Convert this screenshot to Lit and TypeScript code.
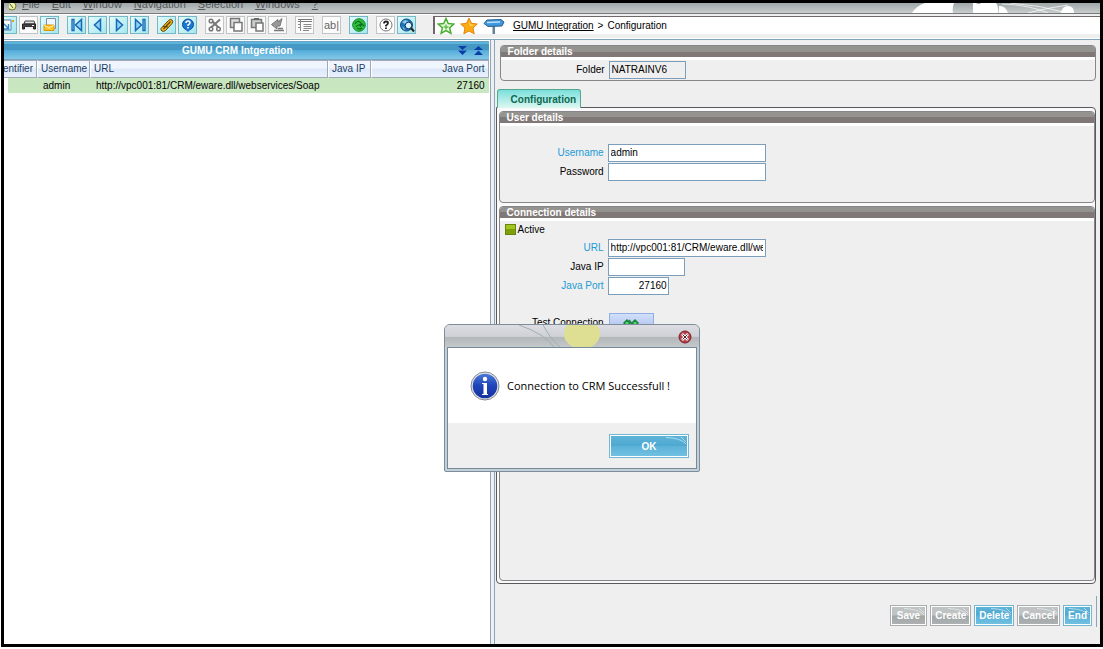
import { LitElement, html, css, svg } from "lit";
import { customElement, property } from "lit/decorators.js";

const stroke = "#1769b5";

const ICONS: Record<string, unknown> = {
  doc: svg`<path d="M-4 3h15v10h-15z" fill="#fff" stroke="#5a7fa6"/><path d="M3 6l5 5M8.500 7v5H4" stroke="#2b86d1" stroke-width="1.500" fill="none"/><rect x="12" y="3" width="2" height="2" fill="#e2a21c"/>`,
  print: svg`<path d="M4 4h9l1 3H3z" fill="#ddd" stroke="#444"/><path d="M1.500 7h13v5h-2v-2h-9v2h-2z" fill="#444" stroke="#222"/><path d="M4 10h8v2H4z" fill="#eee"/><rect x="11" y="8" width="2" height="1" fill="#fff"/>`,
  open: svg`<path d="M4.500 1.500h9v10h-9z" fill="#eef6fc" stroke="#7a8fa5"/><path d="M2 8h10v5.500H2z" fill="#fbc42b" stroke="#d9960c"/><path d="M2 8l5 3 5-3" stroke="#fff2b0"/>`,
  first: svg`<path d="M3 2.500h2v11H3z" fill="#8fd3f7" stroke=${stroke} stroke-width="1.300"/><path d="M12.500 2.500v11L6.500 8z" fill="#8fd3f7" stroke=${stroke} stroke-width="1.500"/>`,
  prev: svg`<path d="M10.500 2.500v11L4.500 8z" fill="#8fd3f7" stroke=${stroke} stroke-width="1.500"/>`,
  next: svg`<path d="M5.500 2.500v11L11.500 8z" fill="#8fd3f7" stroke=${stroke} stroke-width="1.500"/>`,
  last: svg`<path d="M11 2.500h2v11h-2z" fill="#8fd3f7" stroke=${stroke} stroke-width="1.300"/><path d="M3.500 2.500v11L9.500 8z" fill="#8fd3f7" stroke=${stroke} stroke-width="1.500"/>`,
  clip: svg`<path d="M2 11.500l7.500-8q2-2 3.500-.5t0 3.500l-6.500 7q-2 1.500-3.500.5t-1-2.500z" fill="#f3b51c" stroke="#5b4208"/><path d="M4.500 12l7-7.500M4 9.500l5 .5" stroke="#5b4208" stroke-width="1.200"/>`,
  help: svg`<circle cx="8" cy="7.500" r="5.500" fill="#1c77cf" stroke="#0d4c96"/><path d="M5 12l3 3 3-3z" fill="#1c77cf"/><path d="M6 6q0-2 2-2t2 1.700Q10 7 8 8v1M8 10v1.500" stroke="#fff" stroke-width="1.500" fill="none"/>`,
  cut: svg`<path d="M4 3l8 8M13 2.500l-9 8" stroke="#777" stroke-width="2"/><circle cx="4" cy="4" r="1.800" fill="#fff" stroke="#777" stroke-width="1.500"/><circle cx="4" cy="12" r="1.800" fill="#fff" stroke="#777" stroke-width="1.500"/><circle cx="11.500" cy="12" r="1.800" fill="#fff" stroke="#777" stroke-width="1.500"/>`,
  copy: svg`<path d="M2.500 1.500h9v9h-9z" fill="#ddd" stroke="#777" stroke-width="1.500"/><path d="M6 5.500h8v8.500H6z" fill="#fff" stroke="#777" stroke-width="1.500"/>`,
  paste: svg`<path d="M2.500 2.500h10v8h-10z" fill="#ccc" stroke="#777" stroke-width="1.500"/><path d="M5 2h5" stroke="#666" stroke-width="2"/><path d="M7 6h7v8H7z" fill="#fff" stroke="#777" stroke-width="1.500"/>`,
  undo: svg`<path d="M12 1.500L8 5V2.500L1.500 7.500 7 12V9h3z" fill="#999" stroke="#777"/><path d="M4 13.500h10M8 11.500h5" stroke="#777" stroke-width="1.500"/>`,
  list: svg`<path d="M1 2.500h14M1 4.500h14" stroke="#777"/><path d="M3.500 3v11M6.500 7.500h8M6.500 9.500h8M6.500 11.500h8M6 13.500h6" stroke="#888"/><path d="M1 7.500h3M1 10.500h3" stroke="#888"/>`,
  globe: svg`<circle cx="8" cy="8" r="6.300" fill="#2fbf3e" stroke="#0f8424"/><path d="M4 7q2-4 5-2t-1 3q-3 1-3 2M9 10l2-3 2 2M6 11q3 2 5 0" stroke="#0a6f1a" fill="none" stroke-width="1.300"/>`,
  about: svg`<circle cx="8" cy="8" r="6" fill="#fff" stroke="#777"/><path d="M6 6.500q0-2 2-2t2 1.500-2 2.500v1M8 10.500V12" stroke="#222" stroke-width="1.800" fill="none"/>`,
  search: svg`<circle cx="7.500" cy="8" r="6" fill="#1d74bb" stroke="#134d83"/><path d="M3 5q3-3 6-1L6 7zM3 9l3 3-1 1z" fill="#8fd0ee"/><circle cx="9.500" cy="8.500" r="3.300" fill="#d9f2fb" stroke="#15395c"/><path d="M12 11l3 3.500" stroke="#222" stroke-width="2"/>`,
  abc: svg`<text x="0" y="12" font-size="11" fill="#666" font-family="Liberation Sans, sans-serif">ab|</text>`,
};

/** Square tool button; the tone decides between the cyan, plain and greyed look. */
@customElement("tool-button")
class ToolButton extends LitElement {
  @property() icon = "";
  @property() label = "";
  @property() tone = "on";
  static styles = css`
    :host { display: block; flex: none; }
    button {
      display: grid; place-items: center; width: 19px; height: 18px; padding: 0;
      border: 1px solid #8fb8bd; background: #fbfbfb; overflow: hidden;
    }
    .on { background: linear-gradient(135deg, #e4fafb, #a5e7f0); border-color: #74b9c3; }
    .off { border-color: #c3c6c7; }
    svg { display: block; width: 16px; height: 16px; }
  `;
  render() {
    return html`<button class=${this.tone} aria-label=${this.label}>
      <svg viewBox="0 0 16 16" fill="none">${ICONS[this.icon]}</svg>
    </button>`;
  }
}

/** Framed group with a two-tone grey caption bar. */
@customElement("group-box")
class GroupBox extends LitElement {
  @property() caption = "";
  static styles = css`
    :host { display: block; border: 1px solid #86868a; border-radius: 4px; overflow: hidden; background: #efefef; }
    h2 {
      margin: 0; padding-left: 7px; height: 14px; box-sizing: border-box; border-bottom: 3px solid #fff;
      font: bold 10px/12px "Liberation Sans", Arial, sans-serif; color: #fff;
      background: linear-gradient(#95938f 0 50%, #7f7876 50%);
    }
  `;
  render() {
    return html`<h2>${this.caption}</h2><slot></slot>`;
  }
}

@customElement("app-root")
class AppRoot extends LitElement {
  static styles = css`
    :host {
      display: block; height: 100vh; box-sizing: border-box; padding: 0 0 2px 1px;
      background: #fff; color: #000; font: 10px/14px "Liberation Sans", Arial, sans-serif;
    }
    * { box-sizing: border-box; }
    .frame { position: relative; display: flex; flex-direction: column; height: 100%; border: 3px solid #000; background: #efefef; overflow: hidden; }

    .menubar {
      display: flex; align-items: flex-end; gap: 12px; height: 11px; flex: none; padding-left: 5px; overflow: hidden;
      border-bottom: 1px solid #77797a; background: linear-gradient(#9fa7a9, #c9cccc); color: #55595c; font-size: 11px;
    }
    .menubar a { color: inherit; text-decoration: none; padding-bottom: 2px; }
    .menubar u { text-underline-offset: 1px; }
    .app-icon { flex: none; width: 9px; height: 10px; margin-right: -8px; }
    .swirl { margin-left: auto; width: 190px; height: 10px; flex: none; }

    .toolbar { display: flex; height: 25px; flex: none; border-bottom: 1px solid #fff; }
    .tools { display: flex; gap: 2px; padding-top: 1px; width: 429px; flex: none; border-top: 1px solid #fff; overflow: hidden; }
    .tools .cut-off { margin-left: -6px; }
    .tools .wide { margin-left: 6px; }
    .address {
      flex: 1; display: flex; align-items: center; gap: 5px; margin: 2px 0 4px; padding-left: 2px;
      border-top: 1px solid #6f6866; border-left: 2px solid #6f6866; background: #fff;
    }
    .address svg { flex: none; width: 18px; height: 18px; }
    .address .sign { width: 22px; }
    .crumbs { padding-left: 3px; white-space: nowrap; }
    .crumbs a { color: #000; }
    .crumbs span { padding: 0 4px; }

    .main { flex: 1; display: flex; min-height: 0; border-top: 1px solid #7ea6bd; }
    .left { flex: 0 0 44.400%; display: flex; flex-direction: column; background: #fff; border-right: 1px solid #8ba5bb; padding: 1px 1px 0 0; }
    .title {
      display: flex; align-items: center; height: 18px; padding-right: 4px; border-top: 1px solid #6aa5c6; flex: none;
      background: linear-gradient(#5db3d9 0 10%, #4598c4 12% 48%, #55addb 50%, #83c9e6); color: #fff; font-weight: bold;
    }
    .title h1 { flex: 1; margin: 0; padding-left: 18px; text-align: center; font: inherit; }
    .title button { width: 12px; height: 14px; padding: 0; margin-left: 4px; border: 0; background: none; display: grid; place-items: center; }
    .title svg { display: block; width: 9px; height: 9px; }

    table { width: 100%; table-layout: fixed; border-collapse: separate; border-spacing: 0; border-top: 1px solid #79a3c3; white-space: nowrap; }
    th, td { padding: 0 3px; height: 15px; font-weight: normal; text-align: left; overflow: hidden; }
    th { height: 18px; color: #1b3d63; border: 1px solid #a0a9b4; border-left-color: #fff; background: linear-gradient(#eef5fd 0 45%, #dbe7f9 50%, #e9f1fd); }
    td { background: #c8e6c0; padding: 0 4px; }
    td:first-child { background: linear-gradient(90deg, #fff 4px, #c8e6c0 4px); }
    .c-id { width: 33px; } .c-user { width: 53px; } .c-url { width: 238px; } .c-ip { width: 43px; }
    th.first { padding-left: 0; border-left: 0; }
    .clip { display: flex; justify-content: flex-end; overflow: hidden; }
    th.num, td.num { text-align: right; }
    td.user { padding-left: 6px; }

    .right { flex: 1; min-width: 0; display: flex; flex-direction: column; margin-left: 3px; padding: 5px 4px 0 0; border-left: 1px solid #8ba5bb; }
    .folder { margin-left: 5px; height: 36px; flex: none; }
    .tabs { display: flex; height: 19px; margin: 8px 0 -1px 2px; flex: none; position: relative; }
    .tab {
      padding: 2px 4px 0 13px; border: 1px solid #55a88e; border-bottom: 0; border-radius: 3px 3px 0 0; color: #0c6a50;
      background: linear-gradient(#7adfdc, #dff7f2); font: bold 10px/14px "Liberation Sans", Arial, sans-serif;
    }
    .panel { flex: 1; display: flex; flex-direction: column; gap: 3px; margin-left: 1px; padding: 3px 0 2px 2px; border: 1px solid #5a5a5c; border-radius: 0 4px 4px 4px; background: #fafafa; min-height: 0; }
    .user-box { height: 92px; flex: none; }
    .conn-box { flex: 1; }

    .field { display: grid; grid-template-columns: 104px 1fr; column-gap: 4px; align-items: center; height: 19px; }
    .field label { text-align: right; white-space: nowrap; }
    .req { color: #219bd6; }
    .field input { width: 158px; height: 18px; padding: 0 2px; border: 1px solid #7b9ebd; border-radius: 0; background: #fff; font: inherit; color: #000; outline: 0; }
    .field .w-77 { width: 77px; }
    .field .w-61 { width: 61px; text-align: right; padding-right: 1px; }
    .folder .field input { background: #efefef; }
    .user-fields { padding-top: 17px; }
    .active { display: flex; align-items: center; gap: 2px; height: 17px; padding-left: 5px; }
    .active input { appearance: none; margin: 0; width: 11px; height: 11px; border: 1px solid #66850d; background: linear-gradient(#a6c420 0 45%, #7f9f08 50%); }
    .test { margin-top: 18px; }
    .test button { margin-left: 1px; width: 45px; height: 19px; padding: 0; border: 1px solid #8fb0e0; background: linear-gradient(#d3dffa, #a8bcec); display: grid; place-items: center; }
    .test svg { display: block; width: 16px; height: 10px; }

    .footer { flex: none; display: flex; justify-content: flex-end; align-items: center; gap: 3px; height: 31px; margin: 12px -1px 17px 0; padding: 8px 4px 0 0; border-right: 1px solid #8ba5bb; }
    .btn {
      position: relative; height: 21px; min-width: 26px; padding: 0 4px; border: 1px solid #a9adad; color: #fff; box-shadow: inset 0 0 0 1px #fff;
      background: linear-gradient(#bfc3c3 0 48%, #a0a6a6 52%, #aeb2b2); font: bold 10px/17px "Liberation Sans", Arial, sans-serif;
    }
    .roomy { padding: 0 6px; }
    .blue { border-color: #74b7d3; background: linear-gradient(#5cb3d8 0 10%, #4fa8d0 48%, #5db2d9 52%, #72c2e2); }
    .btn svg { position: absolute; top: 2px; right: 2px; width: 20px; height: 8px; }

    .dialog {
      position: absolute; left: 440px; top: 321px; width: 256px; padding: 0 2px 2px; border: 1px solid #7d8d99; border-radius: 6px 6px 2px 2px;
      background: #c4d0d8;
    }
    .dialog-bar { display: flex; align-items: center; justify-content: flex-end; position: relative; height: 22px; margin: 0 -2px; padding: 2px 7px 0 0; border-radius: 5px 5px 0 0; overflow: hidden; background: linear-gradient(#dddde3, #cfd1d7 52%, #b4b7b9 55%, #c3c8cb); }
    .dialog-bar .deco { position: absolute; left: 60px; top: 0; width: 110px; height: 23px; }
    .close { position: relative; width: 14px; height: 14px; padding: 0; border: 0; background: none; }
    .close svg { display: block; width: 14px; height: 14px; }
    .dialog-body { border: 1px solid #74899a; background: #efefef; }
    .message { display: flex; align-items: center; gap: 7px; height: 75px; padding-left: 22px; background: #fff; font: 11px/16px "Open Sans", sans-serif; }
    .message svg { width: 30px; height: 30px; flex: none; }
    .actions { display: flex; justify-content: flex-end; padding: 11px 7px 10px; }
    .actions .btn { width: 80px; height: 24px; }
  `;

  private gloss() {
    return html`<svg viewBox="0 0 20 8" fill="none" stroke="#fff" stroke-opacity=".5" aria-hidden="true"><path d="M0 .5Q15 1 20 7M15 0l5 5"/></svg>`;
  }

  private action(text: string, look = "") {
    return html`<button class="btn ${look}">${this.gloss()}${text}</button>`;
  }

  private menu(key: string, rest: string) {
    return html`<a href="#"><u>${key}</u>${rest}</a>`;
  }

  render() {
    return html`<div class="frame">
      <nav class="menubar">
        <svg class="app-icon" viewBox="0 0 9 10"><circle cx="3" cy="3" r="4" fill="#eef0b0" stroke="#6f7d20"/><path d="M1 1l3 4" stroke="#55601a"/></svg>
        ${this.menu("F", "ile")}${this.menu("E", "dit")}${this.menu("W", "indow")}${this.menu("N", "avigation")}${this.menu("S", "election")}${this.menu("W", "indows")}${this.menu("?", "")}
        <svg class="swirl" viewBox="0 0 190 10" fill="#fff"><path d="M2 10Q6 3 15 0H44q-2 5-1 10zM63 10V0h3q3 3 6-1l14 1q3 4 2 10zM89 10V3q6-1 9 7zM151 10q1-7 7-7t6 7z"/><path d="M92 1q28 1 46 9M100 0q30 2 58 10M118 10q14-4 40-8" fill="none" stroke="#fff" stroke-opacity=".7"/></svg>
      </nav>

      <div class="toolbar">
        <div class="tools">
          <tool-button class="cut-off" icon="doc" label="New"></tool-button>
          <tool-button icon="print" label="Print" tone="off"></tool-button>
          <tool-button icon="open" label="Open"></tool-button>
          <tool-button class="wide" icon="first" label="First"></tool-button>
          <tool-button icon="prev" label="Previous"></tool-button>
          <tool-button icon="next" label="Next"></tool-button>
          <tool-button icon="last" label="Last"></tool-button>
          <tool-button class="wide" icon="clip" label="Attachments"></tool-button>
          <tool-button icon="help" label="Help"></tool-button>
          <tool-button class="wide" icon="cut" label="Cut" tone="off"></tool-button>
          <tool-button icon="copy" label="Copy" tone="off"></tool-button>
          <tool-button icon="paste" label="Paste" tone="off"></tool-button>
          <tool-button icon="undo" label="Undo" tone="off"></tool-button>
          <tool-button class="wide" icon="list" label="List" tone="off"></tool-button>
          <tool-button class="wide" icon="abc" label="Text" tone="off"></tool-button>
          <tool-button class="wide" icon="globe" label="Web"></tool-button>
          <tool-button class="wide" icon="about" label="About" tone="off"></tool-button>
          <tool-button icon="search" label="Search"></tool-button>
        </div>
        <div class="address">
          <svg viewBox="0 0 18 18"><path d="M9 1.500l2.300 5 5.500.6-4.100 3.700 1.200 5.500L9 13.500l-4.900 2.800 1.200-5.500L1.200 7.100l5.500-.6z" fill="#e8fbe0" stroke="#45ad2e" stroke-width="1.500"/><path d="M9 7.500v5M6.500 10h5" stroke="#62c04c" stroke-width="1.500"/></svg>
          <svg viewBox="0 0 18 18"><path d="M9 1l2.500 5.300 5.800.7-4.300 4 1.200 5.800L9 14l-5.200 2.800L5 11 .7 7l5.800-.7z" fill="#fbac12" stroke="#e08317"/><path d="M9 3.500l1.500 4 4.500.5-5 1z" fill="#ffe36e"/></svg>
          <svg class="sign" viewBox="0 0 22 18"><path d="M9.500 5H12v12H9.500z" fill="#64819a"/><path d="M1 6.500L4 3l14-.5 3 2.500-2 4-14 .5z" fill="#3e97dc" stroke="#2d618e"/><path d="M4 5.500L17 5" stroke="#b7e2fa" stroke-width="1.500"/></svg>
          <div class="crumbs"><a href="#">GUMU Integration</a><span>&gt;</span>Configuration</div>
        </div>
      </div>

      <div class="main">
        <section class="left">
          <div class="title">
            <h1>GUMU CRM Intgeration</h1>
            <button aria-label="Expand all"><svg viewBox="0 0 9 9" fill="#0b3fa5"><path d="M0 0h9L4.500 4zM0 4.500h9L4.500 9z"/></svg></button>
            <button aria-label="Collapse all"><svg viewBox="0 0 9 9" fill="#0b3fa5"><path d="M0 4h9L4.500 0zM0 9h9L4.500 4.500z"/></svg></button>
          </div>
          <table>
            <colgroup><col class="c-id" /><col class="c-user" /><col class="c-url" /><col class="c-ip" /><col /></colgroup>
            <thead>
              <tr><th class="first"><div class="clip">Identifier</div></th><th>Username</th><th>URL</th><th>Java IP</th><th class="num">Java Port</th></tr>
            </thead>
            <tbody>
              <tr><td></td><td class="user">admin</td><td class="user">http://vpc001:81/CRM/eware.dll/webservices/Soap</td><td></td><td class="num">27160</td></tr>
            </tbody>
          </table>
        </section>

        <section class="right">
          <group-box class="folder" caption="Folder details">
            <div class="field"><label for="folder">Folder</label><input id="folder" class="w-77" value="NATRAINV6" readonly /></div>
          </group-box>
          <div class="tabs" role="tablist"><button class="tab" role="tab" aria-selected="true">Configuration</button></div>
          <div class="panel">
            <group-box class="user-box" caption="User details">
              <div class="user-fields">
                <div class="field"><label class="req" for="user">Username</label><input id="user" value="admin" /></div>
                <div class="field"><label for="pass">Password</label><input id="pass" type="password" /></div>
              </div>
            </group-box>
            <group-box class="conn-box" caption="Connection details">
              <div class="active"><input id="active" type="checkbox" checked /><label for="active">Active</label></div>
              <div class="field"><label class="req" for="url">URL</label><input id="url" value="http://vpc001:81/CRM/eware.dll/webservices/Soap" /></div>
              <div class="field"><label for="ip">Java IP</label><input id="ip" class="w-77" /></div>
              <div class="field"><label class="req" for="port">Java Port</label><input id="port" class="w-61" value="27160" /></div>
              <div class="field test"><label for="test">Test Connection</label>
                <button id="test" aria-label="Test Connection"><svg viewBox="0 0 16 10" fill="none" stroke="#14853a" stroke-width="1.500"><path d="M1 5l3-3 3 3-3 3zM9 5l3-3 3 3-3 3z" fill="#5fce74"/><path d="M6 2l4 5"/></svg></button>
              </div>
            </group-box>
          </div>
          <div class="footer">
            ${this.action("Save", "roomy")}${this.action("Create")}${this.action("Delete", "blue")}${this.action("Cancel")}${this.action("End", "blue")}
          </div>
        </section>
      </div>

      <div class="dialog" role="dialog" aria-labelledby="msg">
        <div class="dialog-bar">
          <svg class="deco" viewBox="0 0 110 23" fill="none"><ellipse cx="77" cy="9" rx="18" ry="15" fill="#dedf92"/><path d="M14 0q26 9 36 23M38 0q8 15 18 23" stroke="#9fb0ae"/><path d="M24 23q4-3 9 0z" fill="#b7dc72"/></svg>
          <button class="close" aria-label="Close"><svg viewBox="0 0 14 14"><circle cx="7" cy="7" r="6" fill="#b8404a" stroke="#7c2029"/><path d="M4 4l6 6M10 4l-6 6" stroke="#fff" stroke-width="2.500"/><path d="M4.500 4.500l5 5M9.500 4.500l-5 5" stroke="#5a2028"/></svg></button>
        </div>
        <div class="dialog-body">
          <div class="message">
            <svg viewBox="0 0 30 30"><defs><linearGradient id="ball" x2="0" y2="1"><stop stop-color="#4b78d6"/><stop offset=".5" stop-color="#1e44b8"/><stop offset="1" stop-color="#1531a0"/></linearGradient></defs><circle cx="15" cy="15" r="14" fill="#e4e6ea" stroke="#84878e"/><circle cx="15" cy="15" r="12.300" fill="url(#ball)"/><circle cx="15" cy="8" r="2.200" fill="#fff"/><path d="M12 12h5v11h1v1h-6v-1h1.500V13H12z" fill="#fff"/></svg>
            <span id="msg">Connection to CRM Successfull !</span>
          </div>
          <div class="actions"><button class="btn blue">${this.gloss()}OK</button></div>
        </div>
      </div>
    </div>`;
  }
}
